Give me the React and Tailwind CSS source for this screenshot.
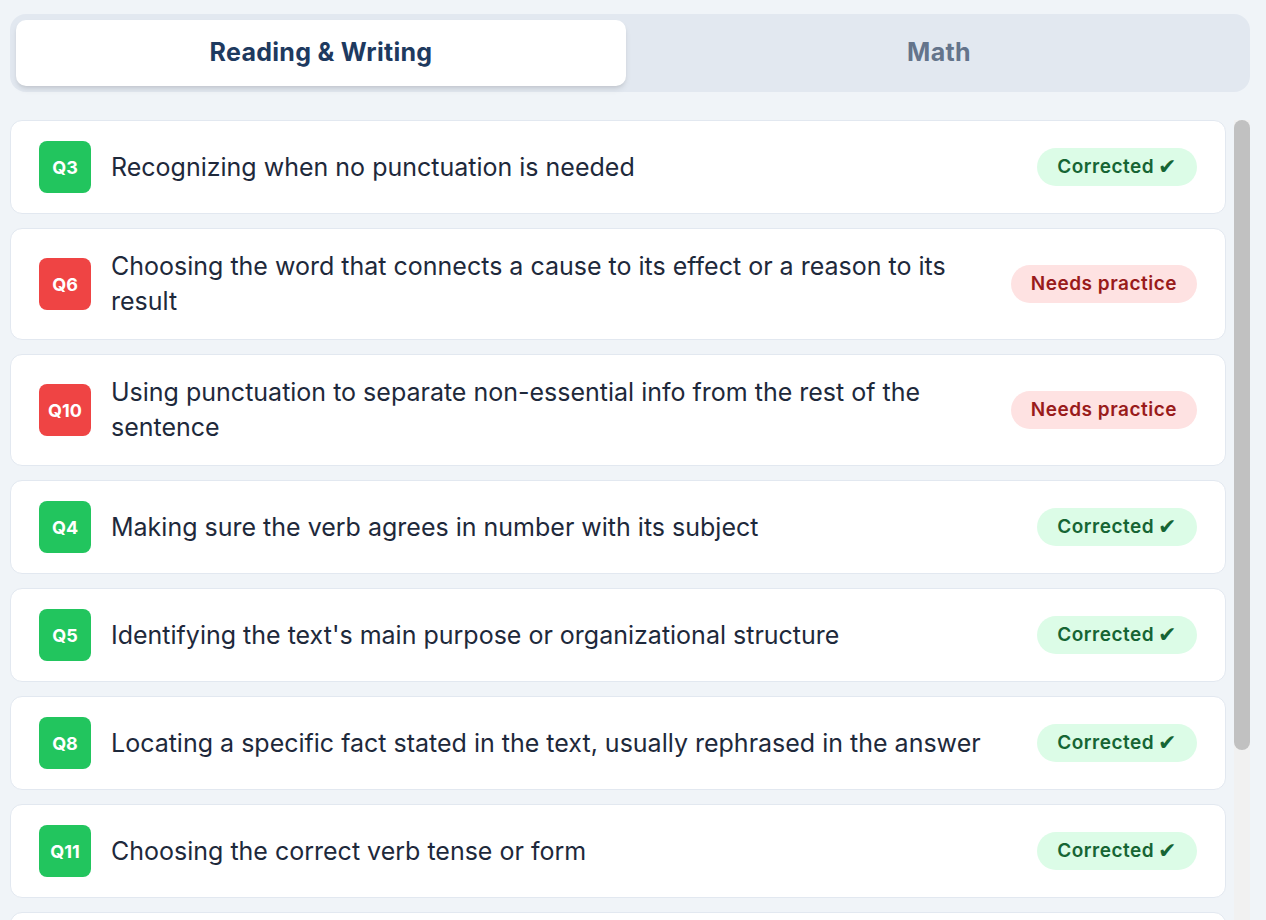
import React, { useState } from 'react';

const items = [
  { q: 'Q3', text: 'Recognizing when no punctuation is needed', ok: true },
  { q: 'Q6', text: 'Choosing the word that connects a cause to its effect or a reason to its result', ok: false },
  { q: 'Q10', text: 'Using punctuation to separate non-essential info from the rest of the sentence', ok: false },
  { q: 'Q4', text: 'Making sure the verb agrees in number with its subject', ok: true },
  { q: 'Q5', text: "Identifying the text's main purpose or organizational structure", ok: true },
  { q: 'Q8', text: 'Locating a specific fact stated in the text, usually rephrased in the answer', ok: true },
  { q: 'Q11', text: 'Choosing the correct verb tense or form', ok: true },
  { q: 'Q2', text: 'Determining the meaning of a word from its context', ok: true },
];

const Row = ({ q, text, ok }) => (
  <div className="flex items-center gap-5 rounded-xl border border-[#e2e8f0] bg-white px-7 py-5">
    <div
      className={
        'flex h-[52px] w-[52px] shrink-0 items-center justify-center rounded-lg text-[18px] font-bold text-white ' +
        (ok ? 'bg-[#22c55e]' : 'bg-[#ef4444]')
      }
    >
      {q}
    </div>
    <p className="flex-1 text-[25px] leading-[35px] text-[#1e293b]">{text}</p>
    {ok ? (
      <span className="ml-4 flex h-[38px] shrink-0 items-center gap-1 rounded-full bg-[#dcfce7] px-5 text-[19px] font-semibold leading-6 tracking-[0.5px] text-[#166534]">
        Corrected
        <span className="text-[22px] leading-none" style={{ fontFamily: '"DejaVu Sans", sans-serif' }}>
          ✔
        </span>
      </span>
    ) : (
      <span className="ml-4 flex h-[38px] shrink-0 items-center rounded-full bg-[#fee2e2] px-5 text-[19px] font-semibold leading-6 tracking-[0.5px] text-[#991b1b]">
        Needs practice
      </span>
    )}
  </div>
);

export default function App() {
  const [tab, setTab] = useState('rw');

  return (
    <div
      className="flex h-[920px] flex-col overflow-hidden bg-[#f0f4f8] pl-[10px] pr-4 pt-[14px]"
      style={{ fontFamily: 'Inter, "Noto Sans", sans-serif' }}
    >
      <div className="flex gap-2 rounded-2xl bg-[#e2e8f0] p-[6px]">
        <button
          onClick={() => setTab('rw')}
          className={
            'h-[66px] flex-1 rounded-[10px] text-[25px] font-bold tracking-[0.3px] ' +
            (tab === 'rw' ? 'bg-white text-[#1e3a5f] shadow-md' : 'text-[#64748b]')
          }
        >
          Reading &amp; Writing
        </button>
        <button
          onClick={() => setTab('math')}
          className={
            'h-[66px] flex-1 rounded-[10px] text-[25px] font-bold tracking-[0.3px] ' +
            (tab === 'math' ? 'bg-white text-[#1e3a5f] shadow-md' : 'text-[#64748b]')
          }
        >
          Math
        </button>
      </div>

      <div className="mt-7 flex min-h-0 flex-1 gap-2">
        <div className="min-w-0 flex-1 overflow-hidden">
          <div className="flex flex-col gap-[14px] pb-5">
            {items.map((it) => (
              <Row key={it.q} {...it} />
            ))}
          </div>
        </div>
        <div className="w-4 shrink-0 bg-[#f1f1f1]">
          <div className="h-[630px] rounded-full bg-[#c1c1c1]" />
        </div>
      </div>
    </div>
  );
}
